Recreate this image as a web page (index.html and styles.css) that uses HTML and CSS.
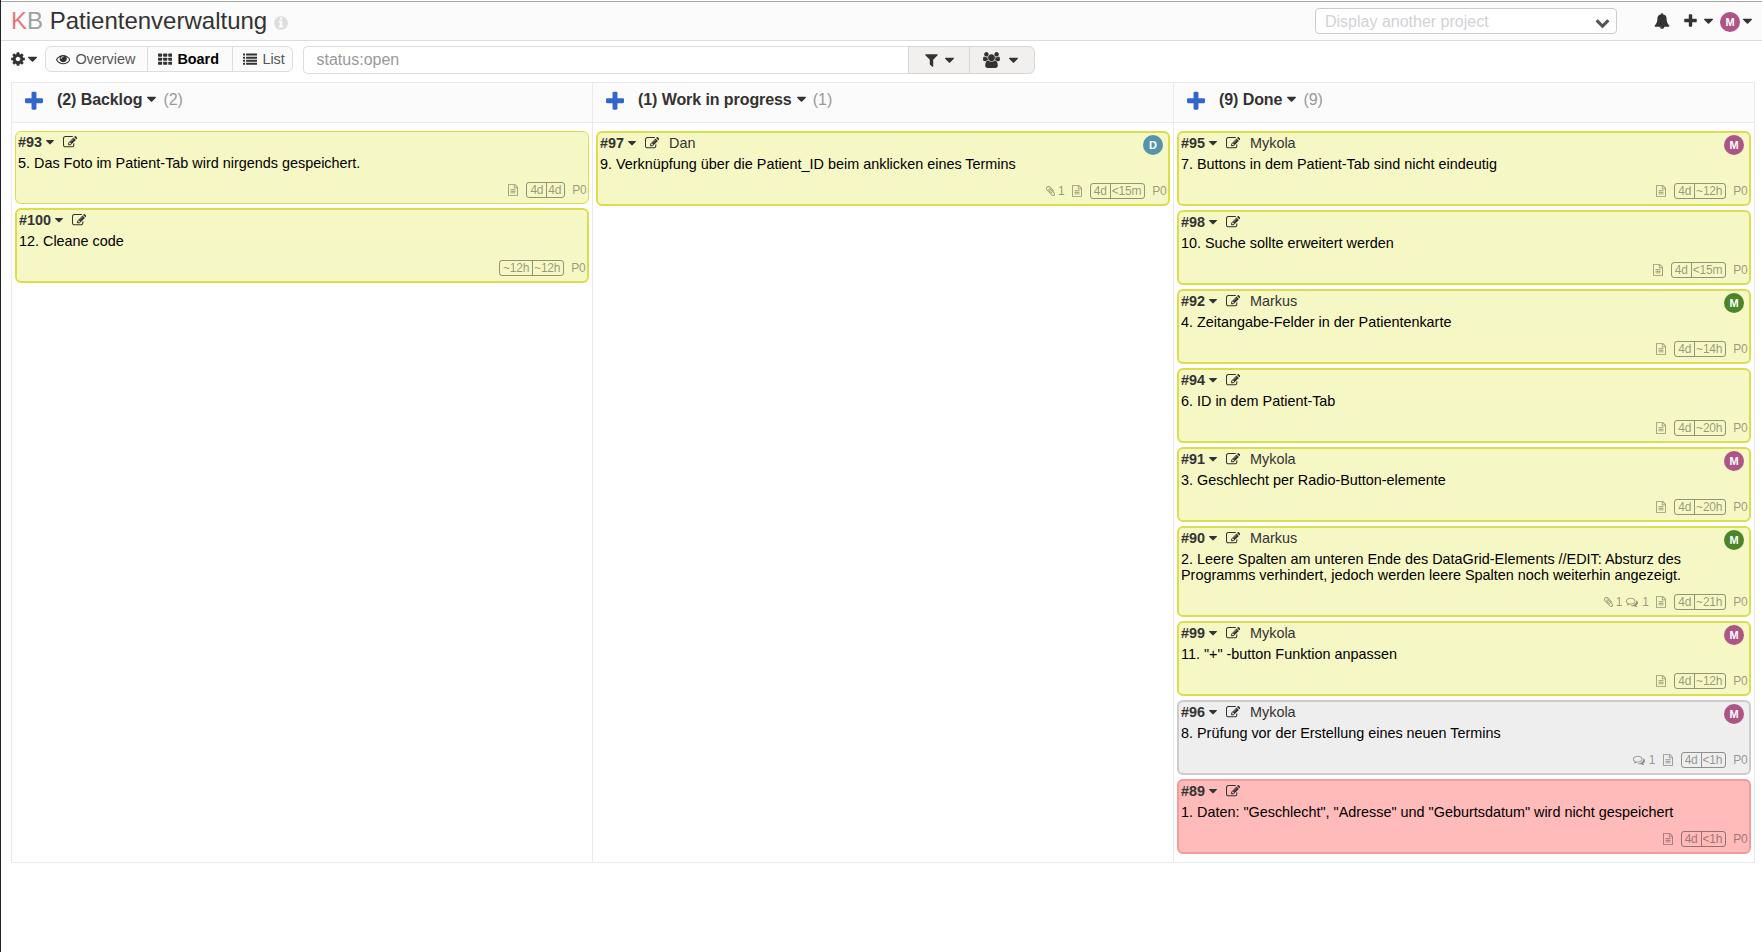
FILE: index.html
```html
<!DOCTYPE html>
<html lang="de">
<head>
<meta charset="utf-8">
<title>Patientenverwaltung</title>
<link rel="stylesheet" href="styles.css">
</head>
<body>
<svg class="sprite" aria-hidden="true">
<symbol id="caret" viewBox="384 0 1024 1792"><path d="M1408 704q0 26-19 45l-448 448q-19 19-45 19t-45-19l-448-448q-19-19-19-45t19-45 45-19h896q26 0 45 19t19 45z"/></symbol>
<symbol id="plus" viewBox="192 0 1408 1792"><path d="M1600 736v192q0 40-28 68t-68 28h-416v416q0 40-28 68t-68 28h-192q-40 0-68-28t-28-68v-416h-416q-40 0-68-28t-28-68v-192q0-40 28-68t68-28h416v-416q0-40 28-68t68-28h192q40 0 68 28t28 68v416h416q40 0 68 28t28 68z"/></symbol>
<symbol id="cog" viewBox="128 0 1536 1792"><path d="M1152 896q0-106-75-181t-181-75-181 75-75 181 75 181 181 75 181-75 75-181zm512-109v222q0 12-8 23t-20 13l-185 28q-19 54-39 91 35 50 107 138 10 12 10 25t-9 23q-27 37-99 108t-94 71q-12 0-26-9l-138-108q-44 23-91 38-16 136-29 186-7 28-36 28h-222q-14 0-24.5-8.5t-11.5-21.5l-28-184q-49-16-90-37l-141 107q-10 9-25 9-14 0-25-11-126-114-165-168-7-10-7-23 0-12 8-23 15-21 51-66.5t54-70.5q-27-50-41-99l-183-27q-13-2-21-12.5t-8-23.5v-222q0-12 8-23t19-13l186-28q14-46 39-92-40-57-107-138-10-12-10-24 0-10 9-23 26-36 98.5-107.5t94.5-71.5q13 0 26 10l138 107q44-23 91-38 16-136 29-186 7-28 36-28h222q14 0 24.5 8.5t11.5 21.5l28 184q49 16 90 37l142-107q9-9 24-9 13 0 25 10 129 119 165 170 7 8 7 22 0 12-8 23-15 21-51 66.5t-54 70.5q26 50 41 98l183 28q13 2 21 12.5t8 23.5z"/></symbol>
<symbol id="eye" viewBox="0 0 1792 1792"><path d="M1664 960q-152-236-381-353 61 104 61 225 0 185-131.500 316.500t-316.500 131.500-316.500-131.500-131.500-316.500q0-121 61-225-229 117-381 353 133 205 333.500 326.500t434.500 121.500 434.500-121.500 333.500-326.500zm-720-384q0-20-14-34t-34-14q-125 0-214.500 89.500t-89.500 214.500q0 20 14 34t34 14 34-14 14-34q0-86 61-147t147-61q20 0 34-14t14-34zm848 384q0 34-20 69-140 230-376.500 368.500t-499.500 138.500-499.500-139-376.500-368q-20-35-20-69t20-69q140-229 376.500-368t499.500-139 499.500 139 376.500 368q20 35 20 69z"/></symbol>
<symbol id="th" viewBox="0 0 1792 1792"><g><rect y="192" width="512" height="384" rx="80"/><rect x="640" y="192" width="512" height="384" rx="80"/><rect x="1280" y="192" width="512" height="384" rx="80"/><rect y="704" width="512" height="384" rx="80"/><rect x="640" y="704" width="512" height="384" rx="80"/><rect x="1280" y="704" width="512" height="384" rx="80"/><rect y="1216" width="512" height="384" rx="80"/><rect x="640" y="1216" width="512" height="384" rx="80"/><rect x="1280" y="1216" width="512" height="384" rx="80"/></g></symbol>
<symbol id="list" viewBox="0 0 1792 1792"><rect y="192" width="256" height="256" rx="32"/><rect x="384" y="192" width="1408" height="256" rx="32"/><rect y="576" width="256" height="256" rx="32"/><rect x="384" y="576" width="1408" height="256" rx="32"/><rect y="960" width="256" height="256" rx="32"/><rect x="384" y="960" width="1408" height="256" rx="32"/><rect y="1344" width="256" height="256" rx="32"/><rect x="384" y="1344" width="1408" height="256" rx="32"/></symbol>
<symbol id="info" viewBox="128 0 1536 1792"><path d="M1152 1376v-160q0-14-9-23t-23-9h-96v-512q0-14-9-23t-23-9h-320q-14 0-23 9t-9 23v160q0 14 9 23t23 9h96v320h-96q-14 0-23 9t-9 23v160q0 14 9 23t23 9h448q14 0 23-9t9-23zm-128-896v-160q0-14-9-23t-23-9h-192q-14 0-23 9t-9 23v160q0 14 9 23t23 9h192q14 0 23-9t9-23zm640 416q0 209-103 385.500t-279.500 279.500-385.500 103-385.500-103-279.500-279.500-103-385.500 103-385.500 279.500-279.500 385.500-103 385.500 103 279.500 279.500 103 385.500z"/></symbol>
<symbol id="bell" viewBox="0 0 1792 1792"><path d="M912 1696q0-16-16-16-59 0-101.500-42.500t-42.500-101.500q0-16-16-16t-16 16q0 73 51.500 124.500t124.500 51.500q16 0 16-16zm816-288q0 52-38 90t-90 38h-448q0 106-75 181t-181 75-181-75-75-181h-448q-52 0-90-38t-38-90q50-42 91-88t85-119.500 74.500-158.500 50-206 19.500-260q0-152 117-282.500t307-158.500q-8-19-8-39 0-40 28-68t68-28 68 28 28 68q0 20-8 39 190 28 307 158.500t117 282.500q0 139 19.500 260t50 206 74.500 158.500 85 119.500 91 88z"/></symbol>
<symbol id="filter" viewBox="192 0 1408 1792"><path d="M1595 295q17 41-14 70l-493 493v742q0 42-39 59-13 5-25 5-27 0-45-19l-256-256q-19-19-19-45v-486l-493-493q-31-29-14-70 17-39 59-39h1280q42 0 59 39z"/></symbol>
<symbol id="users" viewBox="64 0 1920 1792"><path d="M657 896q-162 5-265 128h-134q-82 0-138-40.500t-56-118.500q0-353 124-353 6 0 43.500 21t97.500 42.500 119 21.500q67 0 133-23-5 37-5 66 0 139 81 256zm1071 637q0 120-73 189.500t-194 69.500h-874q-121 0-194-69.500t-73-189.500q0-53 3.500-103.500t14-109 26.500-108.500 43-97.500 62-81 85.500-53.500 111.500-20q10 0 43 21.500t73 48 107 48 135 21.500 135-21.500 107-48 73-48 43-21.500q61 0 111.500 20t85.500 53.500 62 81 43 97.500 26.500 108.500 14 109 3.500 103.500zm-1024-1277q0 106-75 181t-181 75-181-75-75-181 75-181 181-75 181 75 75 181zm704 384q0 159-112.500 271.500t-271.500 112.500-271.500-112.500-112.500-271.500 112.500-271.500 271.500-112.500 271.500 112.500 112.500 271.500zm576 225q0 78-56 118.500t-138 40.500h-134q-103-123-265-128 81-117 81-256 0-29-5-66 66 23 133 23 59 0 119-21.500t97.500-42.500 43.500-21q124 0 124 353zm-128-609q0 106-75 181t-181 75-181-75-75-181 75-181 181-75 181 75 75 181z"/></symbol>
<symbol id="edit" viewBox="0 0 1792 1792"><path d="M888 1184l116-116-152-152-116 116v56h96v96h56zm440-720q-16-16-33 1l-350 350q-17 17-1 33t33-1l350-350q17-17 1-33zm80 594v190q0 119-84.500 203.500t-203.500 84.500h-832q-119 0-203.500-84.500t-84.500-203.500v-832q0-119 84.500-203.500t203.500-84.500h832q63 0 117 25 15 7 18 23 3 17-9 29l-49 49q-14 14-32 8-23-6-45-6h-832q-66 0-113 47t-47 113v832q0 66 47 113t113 47h832q66 0 113-47t47-113v-126q0-13 9-22l64-64q15-15 35-7t20 29zm-96-738l288 288-672 672h-288v-288zm444 132l-92 92-288-288 92-92q28-28 68-28t68 28l152 152q28 28 28 68t-28 68z"/></symbol>
<symbol id="file" viewBox="128 0 1536 1792"><path d="M1596 380q28 28 48 76t20 88v1152q0 40-28 68t-68 28h-1344q-40 0-68-28t-28-68v-1600q0-40 28-68t68-28h896q40 0 88 20t76 48zm-444-244v376h376q-10-29-22-41l-313-313q-12-12-41-22zm384 1528v-1024h-416q-40 0-68-28t-28-68v-416h-768v1536h1280zm-1024-864q0-14 9-23t23-9h704q14 0 23 9t9 23v64q0 14-9 23t-23 9h-704q-14 0-23-9t-9-23v-64zm736 224q14 0 23 9t9 23v64q0 14-9 23t-23 9h-704q-14 0-23-9t-9-23v-64q0-14 9-23t23-9h704zm0 256q14 0 23 9t9 23v64q0 14-9 23t-23 9h-704q-14 0-23-9t-9-23v-64q0-14 9-23t23-9h704z"/></symbol>
<symbol id="clip" viewBox="192 0 1408 1792"><path d="M1596 1385q0 117-79 196t-196 79q-135 0-235-100l-777-776q-113-115-113-271 0-159 110-270t269-111q158 0 273 113l605 606q10 10 10 22 0 16-30.500 46.500t-46.500 30.500q-13 0-23-10l-606-607q-79-77-181-77-106 0-179 75t-73 181q0 105 76 181l776 777q63 63 145 63 64 0 106-42t42-106q0-82-63-145l-581-581q-26-24-60-24-29 0-48 19t-19 48q0 32 25 59l410 410q10 10 10 22 0 16-31 47t-47 31q-12 0-22-10l-410-410q-63-61-63-149 0-82 57-139t139-57q88 0 149 63l581 581q100 98 100 235z"/></symbol>
<symbol id="comments" viewBox="0 0 1792 1792"><path d="M704 384q-153 0-286 52t-211.500 141-78.500 191q0 82 53 158t149 132l97 56-35 84q34-20 62-39l44-31 53 10q78 14 153 14 153 0 286-52t211.500-141 78.500-191-78.500-191-211.500-141-286-52zm0-128q191 0 353.500 68.500t256.500 186.500 94 257-94 257-256.500 186.500-353.500 68.500q-86 0-176-16-124 88-278 128-36 9-86 16h-3q-11 0-20.500-8t-11.500-21q-1-3-1-6.500t.5-6.500 2-6l2.500-5 3.500-5.500 4-5 4.500-5 4-4.500q5-6 23-25t26-29.500 22.500-29 25-38.500 20.500-44q-124-72-195-177t-71-224q0-139 94-257t256.500-186.500 353.500-68.500zm822 1169q10 24 20.500 44t25 38.500 22.500 29 26 29.500 23 25q1 1 4 4.500t4.500 5 4 5 3.500 5.500l2.500 5 2 6 .5 6.500-1 6.500q-3 14-13 22t-22 7q-50-7-86-16-154-40-278-128-90 16-176 16-271 0-472-132 58 4 88 4 161 0 309-45t264-129q125-92 192-212t67-254q0-77-23-152 129 71 204 178t75 230q0 120-71 224.500t-195 176.500z"/></symbol>
<symbol id="chevron" viewBox="0 0 1792 1792"><path d="M1683 808l-742 741q-19 19-45 19t-45-19l-742-741q-19-19-19-45.500t19-45.500l166-165q19-19 45-19t45 19l531 531 531-531q19-19 45-19t45 19l166 165q19 19 19 45.500t-19 45.500z"/></symbol>
</svg>

<header class="topbar">
  <h1 class="title"><span class="logo"><span class="logo-k">K</span>B</span> Patientenverwaltung</h1>
  <svg class="i i-info"><use href="#info"/></svg>
  <div class="project-select"><span>Display another project</span><svg class="i i-chevron"><use href="#chevron"/></svg></div>
  <nav class="user-menu">
    <svg class="i i-bell"><use href="#bell"/></svg>
    <svg class="i i-plus"><use href="#plus"/></svg>
    <svg class="i i-caret"><use href="#caret"/></svg>
    <span class="avatar purple">M</span>
    <svg class="i i-caret last"><use href="#caret"/></svg>
  </nav>
</header>

<section class="toolbar">
  <div class="settings"><svg class="i i-cog"><use href="#cog"/></svg><svg class="i i-caret"><use href="#caret"/></svg></div>
  <ul class="views">
    <li class="v-overview"><svg class="i i-sq"><use href="#eye"/></svg>Overview</li>
    <li class="v-board"><svg class="i i-sq"><use href="#th"/></svg>Board</li>
    <li class="v-list"><svg class="i i-sq"><use href="#list"/></svg>List</li>
  </ul>
  <div class="search">
    <div class="search-input">status:open</div>
    <div class="search-btn filter"><svg class="i i-filter"><use href="#filter"/></svg><svg class="i i-caret"><use href="#caret"/></svg></div>
    <div class="search-btn people"><svg class="i i-users"><use href="#users"/></svg><svg class="i i-caret"><use href="#caret"/></svg></div>
  </div>
</section>

<main class="board">
  <section class="column">
    <h2 class="col-head"><svg class="i add"><use href="#plus"/></svg><b>(2) Backlog</b><svg class="i i-caret"><use href="#caret"/></svg><span>(2)</span></h2>
    <div class="cards">
      <article class="card yellow old">
        <div class="head"><b>#93</b><svg class="i caret"><use href="#caret"/></svg><svg class="i edit"><use href="#edit"/></svg></div>
        <p>5. Das Foto im Patient-Tab wird nirgends gespeichert.</p>
        <div class="foot"><svg class="i file"><use href="#file"/></svg><span class="age"><i>4d</i><i>4d</i></span><span>P0</span></div>
      </article>
      <article class="card yellow">
        <div class="head"><b>#100</b><svg class="i caret"><use href="#caret"/></svg><svg class="i edit"><use href="#edit"/></svg></div>
        <p>12. Cleane code</p>
        <div class="foot"><span class="age"><i>~12h</i><i>~12h</i></span><span>P0</span></div>
      </article>
    </div>
  </section>
  <section class="column">
    <h2 class="col-head"><svg class="i add"><use href="#plus"/></svg><b>(1) Work in progress</b><svg class="i i-caret"><use href="#caret"/></svg><span>(1)</span></h2>
    <div class="cards">
      <article class="card yellow">
        <div class="head"><b>#97</b><svg class="i caret"><use href="#caret"/></svg><svg class="i edit"><use href="#edit"/></svg><span>Dan</span><span class="avatar blue">D</span></div>
        <p>9. Verknüpfung über die Patient_ID beim anklicken eines Termins</p>
        <div class="foot"><svg class="i clip"><use href="#clip"/></svg><span class="n">1</span><svg class="i file"><use href="#file"/></svg><span class="age"><i>4d</i><i>&lt;15m</i></span><span>P0</span></div>
      </article>
    </div>
  </section>
  <section class="column">
    <h2 class="col-head"><svg class="i add"><use href="#plus"/></svg><b>(9) Done</b><svg class="i i-caret"><use href="#caret"/></svg><span>(9)</span></h2>
    <div class="cards">
      <article class="card yellow">
        <div class="head"><b>#95</b><svg class="i caret"><use href="#caret"/></svg><svg class="i edit"><use href="#edit"/></svg><span>Mykola</span><span class="avatar purple">M</span></div>
        <p>7. Buttons in dem Patient-Tab sind nicht eindeutig</p>
        <div class="foot"><svg class="i file"><use href="#file"/></svg><span class="age"><i>4d</i><i>~12h</i></span><span>P0</span></div>
      </article>
      <article class="card yellow">
        <div class="head"><b>#98</b><svg class="i caret"><use href="#caret"/></svg><svg class="i edit"><use href="#edit"/></svg></div>
        <p>10. Suche sollte erweitert werden</p>
        <div class="foot"><svg class="i file"><use href="#file"/></svg><span class="age"><i>4d</i><i>&lt;15m</i></span><span>P0</span></div>
      </article>
      <article class="card yellow">
        <div class="head"><b>#92</b><svg class="i caret"><use href="#caret"/></svg><svg class="i edit"><use href="#edit"/></svg><span>Markus</span><span class="avatar green">M</span></div>
        <p>4. Zeitangabe-Felder in der Patientenkarte</p>
        <div class="foot"><svg class="i file"><use href="#file"/></svg><span class="age"><i>4d</i><i>~14h</i></span><span>P0</span></div>
      </article>
      <article class="card yellow">
        <div class="head"><b>#94</b><svg class="i caret"><use href="#caret"/></svg><svg class="i edit"><use href="#edit"/></svg></div>
        <p>6. ID in dem Patient-Tab</p>
        <div class="foot"><svg class="i file"><use href="#file"/></svg><span class="age"><i>4d</i><i>~20h</i></span><span>P0</span></div>
      </article>
      <article class="card yellow">
        <div class="head"><b>#91</b><svg class="i caret"><use href="#caret"/></svg><svg class="i edit"><use href="#edit"/></svg><span>Mykola</span><span class="avatar purple">M</span></div>
        <p>3. Geschlecht per Radio-Button-elemente</p>
        <div class="foot"><svg class="i file"><use href="#file"/></svg><span class="age"><i>4d</i><i>~20h</i></span><span>P0</span></div>
      </article>
      <article class="card yellow">
        <div class="head"><b>#90</b><svg class="i caret"><use href="#caret"/></svg><svg class="i edit"><use href="#edit"/></svg><span>Markus</span><span class="avatar green">M</span></div>
        <p>2. Leere Spalten am unteren Ende des DataGrid-Elements //EDIT: Absturz des<br>Programms verhindert, jedoch werden leere Spalten noch weiterhin angezeigt.</p>
        <div class="foot"><svg class="i clip"><use href="#clip"/></svg><span class="n">1</span><svg class="i comments"><use href="#comments"/></svg><span class="n">1</span><svg class="i file"><use href="#file"/></svg><span class="age"><i>4d</i><i>~21h</i></span><span>P0</span></div>
      </article>
      <article class="card yellow">
        <div class="head"><b>#99</b><svg class="i caret"><use href="#caret"/></svg><svg class="i edit"><use href="#edit"/></svg><span>Mykola</span><span class="avatar purple">M</span></div>
        <p>11. "+" -button Funktion anpassen</p>
        <div class="foot"><svg class="i file"><use href="#file"/></svg><span class="age"><i>4d</i><i>~12h</i></span><span>P0</span></div>
      </article>
      <article class="card grey">
        <div class="head"><b>#96</b><svg class="i caret"><use href="#caret"/></svg><svg class="i edit"><use href="#edit"/></svg><span>Mykola</span><span class="avatar purple">M</span></div>
        <p>8. Prüfung vor der Erstellung eines neuen Termins</p>
        <div class="foot"><svg class="i comments"><use href="#comments"/></svg><span class="n">1</span><svg class="i file"><use href="#file"/></svg><span class="age"><i>4d</i><i>&lt;1h</i></span><span>P0</span></div>
      </article>
      <article class="card red">
        <div class="head"><b>#89</b><svg class="i caret"><use href="#caret"/></svg><svg class="i edit"><use href="#edit"/></svg></div>
        <p>1. Daten: "Geschlecht", "Adresse" und "Geburtsdatum" wird nicht gespeichert</p>
        <div class="foot"><svg class="i file"><use href="#file"/></svg><span class="age"><i>4d</i><i>&lt;1h</i></span><span>P0</span></div>
      </article>
    </div>
  </section>
</main>
</body>
</html>
```
FILE: styles.css
```css
* { box-sizing: border-box; }

body {
  margin: 0;
  min-height: 952px;
  padding-top: 1px;
  border-left: 1px solid #23232b;
  background: #fff;
  color: #333;
  font: 16px/20px "Liberation Sans", Arial, sans-serif;
}

.sprite { display: block; width: 0; height: 0; }
.i { display: block; flex: none; fill: currentColor; }
.i-caret { width: 9px; height: 16px; }

/* top bar */
.topbar {
  display: flex;
  align-items: center;
  height: 40px;
  padding: 0 10px;
  border-top: 1px solid #a3aaa6;
  border-bottom: 1px solid #dcdcdc;
  background: #fbfbfb;
}
.title { margin: 0; font-size: 24px; font-weight: 400; line-height: 38px; white-space: nowrap; }
.logo { color: #a0a0a0; }
.logo-k { color: #e8777c; }
.i-info { width: 14px; height: 16px; margin: 3px 0 0 7px; color: #dedede; }
.project-select {
  display: flex;
  align-items: center;
  justify-content: space-between;
  width: 302px;
  height: 26px;
  margin-left: auto;
  padding: 0 6px 0 9px;
  border: 1px solid #ccc;
  border-radius: 4px;
  background: #fff;
  color: #d2d2d6;
}
.project-select span { margin-top: 1px; }
.i-chevron { width: 15px; height: 15px; margin-top: 2px; color: #555; }
.user-menu { display: flex; align-items: center; margin-left: 37px; }
.i-bell { width: 16px; height: 16px; }
.i-plus { width: 13px; height: 16px; margin: 0 7px 0 14px; }
.user-menu .avatar { margin: 1px 3px 0 7px; }
.user-menu .last { margin-top: -1px; }
.user-menu .i-bell, .user-menu .i-plus { margin-top: -1px; }

.avatar {
  flex: none;
  width: 20px;
  height: 20px;
  border-radius: 50%;
  color: #fff;
  font-size: 11px;
  font-weight: 700;
  line-height: 21px;
  text-align: center;
}
.purple { background: #ad5585; }
.green { background: #4a8529; }
.blue { background: #5594ab; }

/* toolbar */
.toolbar { display: flex; height: 41px; padding: 5px 0 0 10px; }
.settings { display: flex; align-items: center; width: 34px; height: 25px; }
.i-cog { width: 14px; height: 16px; margin-right: 3px; }
.views {
  display: flex;
  width: 248px;
  height: 26px;
  margin: 0;
  padding: 0;
  border: 1px solid #ddd;
  border-radius: 6px;
  background: #fbfbfb;
  color: #555;
  font-size: 14.4px;
  line-height: 25px;
  list-style: none;
}
.views li { display: flex; align-items: center; gap: 5px; padding-left: 10px; }
.views li + li { border-left: 1px solid #ddd; }
.v-overview { width: 101px; }
.v-board { width: 85px; }
.v-board { color: #000; font-weight: 700; }
.i-sq { width: 14.4px; height: 14.4px; color: #333; }
.search { display: flex; width: 732px; height: 28px; margin-left: 10px; }
.search-input {
  width: 605px;
  padding-left: 12.5px;
  border: 1px solid #dcdcdc;
  border-right: 0;
  border-radius: 5px 0 0 5px;
  color: #999;
  line-height: 26px;
}
.search-btn {
  display: flex;
  align-items: center;
  border: 1px solid #d9d5d2;
  background: #f2f0ef;
}
.filter { width: 61px; padding-left: 16px; gap: 7px; border-right: 0; }
.people { width: 66px; padding-left: 13px; gap: 9px; border-radius: 0 6px 6px 0; }
.i-filter { width: 13px; height: 16px; }
.i-users { width: 17px; height: 16px; }

/* board */
.board {
  display: grid;
  grid-template-columns: repeat(3, 581px);
  width: 1744px;
  margin-left: 10px;
  border: solid #eaeaea;
  border-width: 1px 1px 1px 0;
}
.column { border-left: 1px solid #eaeaea; }
.col-head {
  display: flex;
  height: 40px;
  margin: 0;
  padding: 7px 0 0 13px;
  border-bottom: 1px solid #eaeaea;
  background: #fbfbfb;
  font-size: 16px;
  line-height: 20px;
}
.col-head b { letter-spacing: -.08px; }
.col-head .i-caret { margin: 1px 7px 0 5px; }
.col-head span { color: #999; font-weight: 400; }
.add { width: 18px; height: 23px; margin: 0 14px 0 0; color: #3366cc; }
.cards { display: flex; flex-direction: column; gap: 4px; padding: 8px 3px; }

.card {
  display: flex;
  flex-direction: column;
  border: 2px solid;
  border-radius: 6px;
  font-size: 14.4px;
}
.card.old { border-width: 1px; }
.yellow { border-color: #dbde4a; background: #f5f7c4; }
.grey { border-color: #ccc; background: #eee; }
.red { border-color: #f29a9c; background: #ffbaba; }
.head { display: flex; height: 20px; padding: 0 5px 0 2px; color: #333; }
.head .caret { width: 8px; height: 14px; margin: 3px 9px 0 4px; }
.head .edit { width: 14.4px; height: 14.4px; margin: 3px 9.6px 0 0; }
.head .avatar { margin: 2px 0 0 auto; }
.card p { margin: 3px 0 11px; padding-left: 2px; color: #000; line-height: 16px; }
.foot {
  display: flex;
  align-items: center;
  justify-content: flex-end;
  height: 16px;
  margin-bottom: 5px;
  padding-right: 1.5px;
  color: rgba(0, 0, 0, .4);
  font-size: 12px;
  letter-spacing: -.22px;
  line-height: 16px;
}
.foot .file { width: 10px; height: 12px; margin-right: 8px; }
.foot .clip { width: 9px; height: 12px; margin-right: 3px; }
.foot .comments { width: 12px; height: 12px; margin-right: 4px; }
.n { margin-right: 7.5px; }
.n:has(+ .comments) { margin-right: 4px; }
.age {
  display: flex;
  height: 16px;
  margin-right: 7px;
  border: 1px solid rgba(0, 0, 0, .4);
  border-radius: 3px;
  line-height: 14px;
}
.age i { padding: 0 3px; font-style: normal; }
.age i + i { padding-left: 1px; border-left: 1px solid rgba(0, 0, 0, .4); }
```
